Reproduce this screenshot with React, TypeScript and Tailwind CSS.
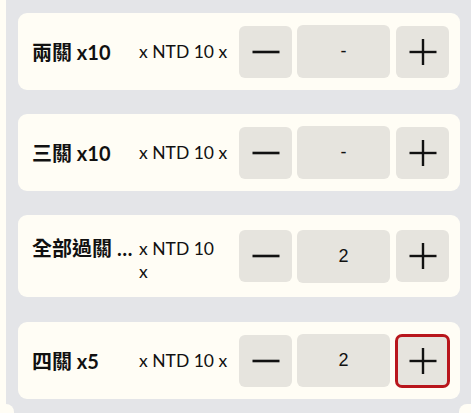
import React from "react";

const Minus = () => (
  <svg width="28" height="28" viewBox="0 0 28 28">
    <line x1="0.5" y1="14" x2="27.5" y2="14" stroke="#111" strokeWidth="2.6" />
  </svg>
);

const Plus = () => (
  <svg width="28" height="28" viewBox="0 0 28 28">
    <line x1="0.5" y1="14" x2="27.5" y2="14" stroke="#111" strokeWidth="2.4" />
    <line x1="14" y1="1" x2="14" y2="27" stroke="#111" strokeWidth="2.4" />
  </svg>
);

type Row = { title: string; value: string; wrap?: boolean; focus?: boolean; tall?: boolean };

const rows: Row[] = [
  { title: "兩關 x10", value: "-" },
  { title: "三關 x10", value: "-" },
  { title: "全部過關 x10", value: "2", wrap: true, tall: true },
  { title: "四關 x5", value: "2", focus: true },
];

function Card({ r }: { r: Row }) {
  return (
    <div
      className={`flex items-center rounded-[9px] bg-[#fffdf5] pl-[14px] pr-[11px] ${
        r.tall ? "h-[82px]" : "h-[77px]"
      }`}
    >
      <div className={`flex flex-1 ${r.wrap ? "items-start pt-[4px]" : "items-center"}`}>
        <div
          className="w-[107px] truncate whitespace-nowrap text-[20px] font-bold leading-[28px] text-[#111]"
          style={{ fontFamily: 'Lato, "Noto Sans CJK TC", sans-serif' }}
        >
          {r.title}
        </div>
        <div
          className={`text-[17.5px] leading-[23px] text-[#111] whitespace-nowrap ${r.wrap ? "mt-[3px]" : ""}`}
          style={{ fontFamily: 'Lato, "Noto Sans CJK TC", sans-serif' }}
        >
          {r.wrap ? (
            <>
              x NTD 10
              <br />x
            </>
          ) : (
            "x NTD 10 x"
          )}
        </div>
      </div>
      <div className="flex items-center">
        <div className="flex h-[52px] w-[53px] items-center justify-center rounded-[6px] bg-[#e6e4de]">
          <Minus />
        </div>
        <div
          className="ml-[5px] flex h-[53px] w-[93px] items-center justify-center rounded-[6px] bg-[#e6e4de] text-[18px] text-[#111]"
          style={{ fontFamily: '"Liberation Sans", Arial, sans-serif' }}
        >
          {r.value}
        </div>
        <div
          className={`ml-[6px] flex h-[52px] w-[53px] items-center justify-center rounded-[6px] bg-[#e6e4de] ${
            r.focus ? "outline-[3px] outline-solid outline-[#b8161c] -outline-offset-2" : ""
          }`}
        >
          <Plus />
        </div>
      </div>
    </div>
  );
}

export default function App() {
  return (
    <div className="flex h-[413px] w-[471px] flex-col overflow-hidden bg-[#fffdf5]">
      <div className="ml-[6px] flex h-[404px] flex-col gap-[24px] bg-[#e4e5e8] pl-[12px] pr-[11px] pt-[13px]">
        {rows.map((r, i) => (
          <div key={i} className={i === 3 ? "mt-[1px]" : ""}>
            <Card r={r} />
          </div>
        ))}
      </div>
      <div className="flex h-[9px] justify-between bg-[#e4e5e8]">
        <div className="h-full w-[14px] rounded-tr-[8px] bg-[#fffdf5]" />
        <div className="h-full w-[12px] rounded-tl-[8px] bg-[#fffdf5]" />
      </div>
    </div>
  );
}
